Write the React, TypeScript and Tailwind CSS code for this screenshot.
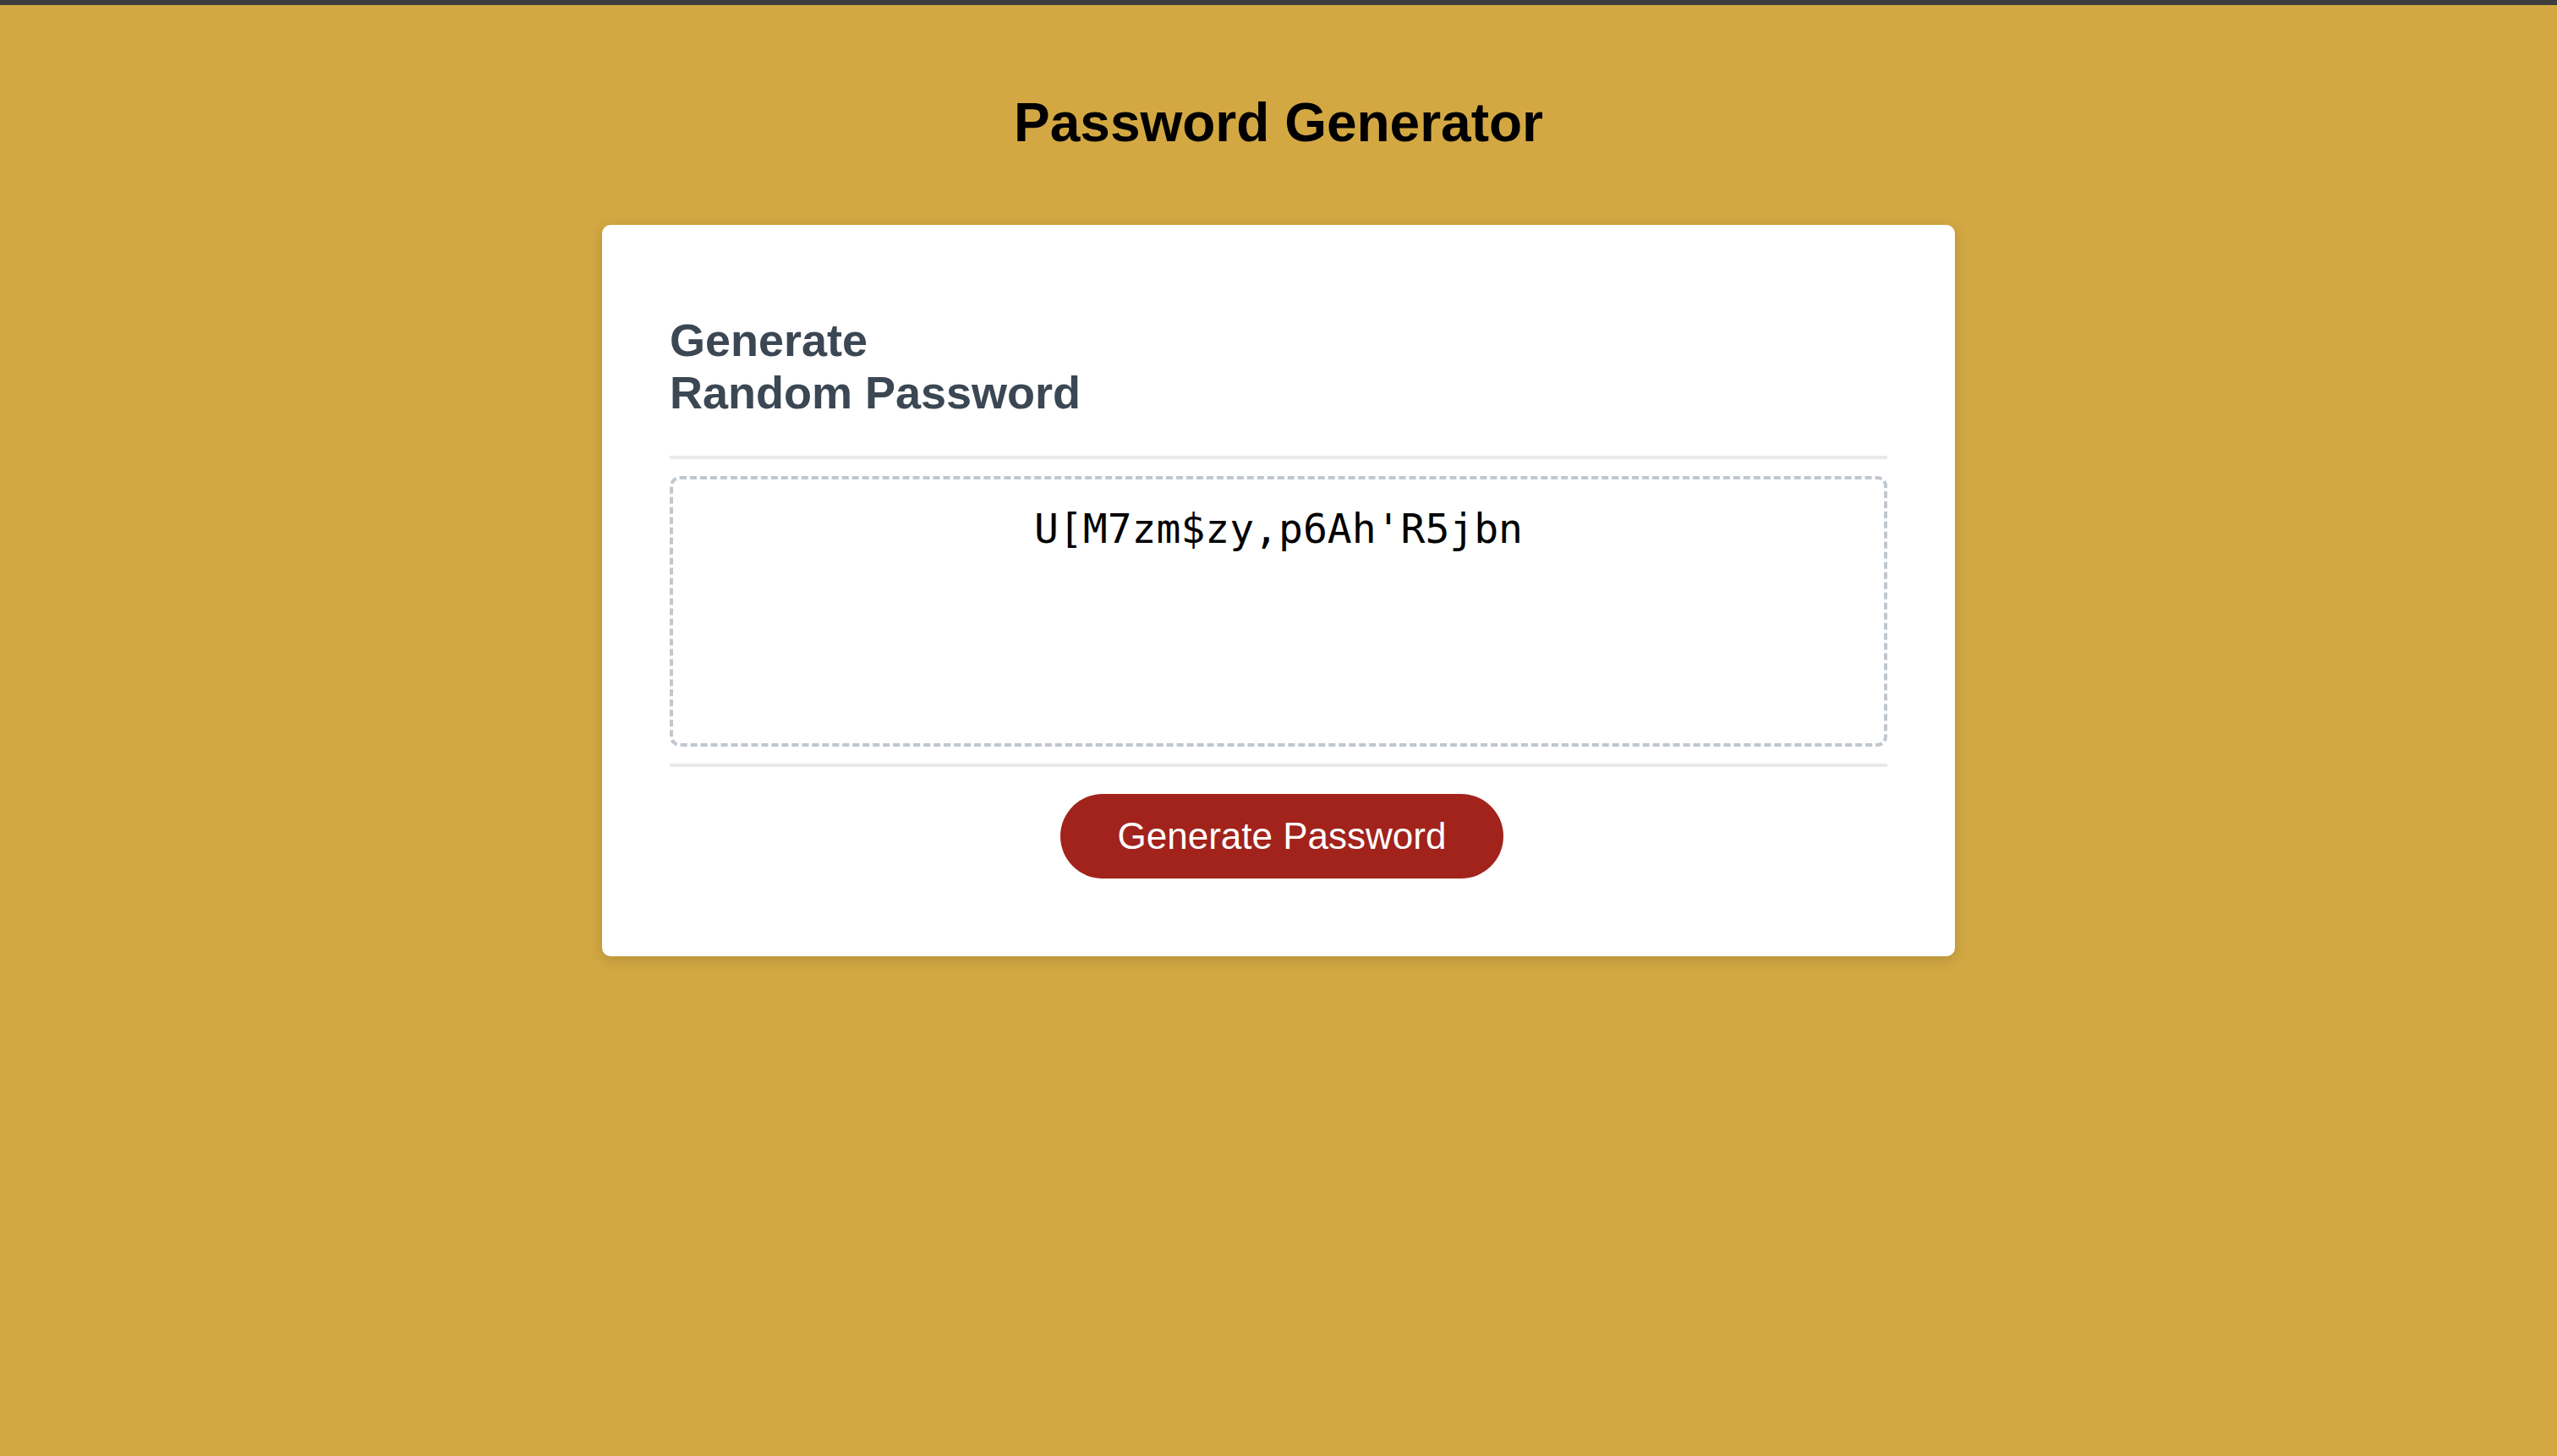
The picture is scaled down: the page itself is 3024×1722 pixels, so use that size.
import { useState } from 'react';

const CHARS =
  "ABCDEFGHIJKLMNOPQRSTUVWXYZabcdefghijklmnopqrstuvwxyz0123456789!\"#$%&'()*+,-./:;<=>?@[]^_`{|}~";

function makePassword(length: number) {
  let out = '';
  for (let i = 0; i < length; i++) {
    out += CHARS[Math.floor(Math.random() * CHARS.length)];
  }
  return out;
}

export default function App() {
  const [password, setPassword] = useState("U[M7zm$zy,p6Ah'R5jbn");

  return (
    <div className="min-h-screen w-full bg-[#d3a843] font-['Liberation_Sans',Arial,sans-serif]">
      {/* Barre du haut */}
      <div className="h-[6px] w-full bg-[#3d3d3d]" />

      <h1 className="pt-[102px] text-center text-[64px] font-bold leading-[74px] text-black">
        Password Generator
      </h1>

      <div className="mx-auto mt-[84px] w-[1600px] rounded-[10px] bg-white px-[80px] pt-[60px] pb-[60px] shadow-[0_4px_16px_rgba(0,0,0,0.15)]">
        {/* En-tête */}
        <div>
          <h2 className="mt-[45px] mb-[44px] text-[54px] font-bold leading-[62px] text-[#3b4753]">
            Generate
            <br />
            Random Password
          </h2>
          <div className="h-[4px] w-full bg-[#e7e9eb]" />
        </div>

        {/* Corps */}
        <textarea
          readOnly
          value={password}
          aria-label="Generated Password"
          className="mt-[20px] mb-[20px] block h-[320px] w-full resize-none overflow-hidden rounded-[12px] border-[4px] border-dashed border-[#c0c7cf] bg-white px-[30px] pt-[30px] text-center font-['DejaVu_Sans_Mono',monospace] text-[48px] leading-[56px] text-black outline-none"
        />

        {/* Pied */}
        <div className="text-center">
          <div className="h-[4px] w-full bg-[#e7e9eb]" />
          <button
            onClick={() => setPassword(makePassword(20))}
            className="mt-[32px] mb-[32px] ml-[40px] mr-[32px] inline-block cursor-pointer rounded-[50px] bg-[#a1231c] px-[68px] py-[28px] text-[44px] leading-[44px] text-white"
          >
            Generate Password
          </button>
        </div>
      </div>
    </div>
  );
}
